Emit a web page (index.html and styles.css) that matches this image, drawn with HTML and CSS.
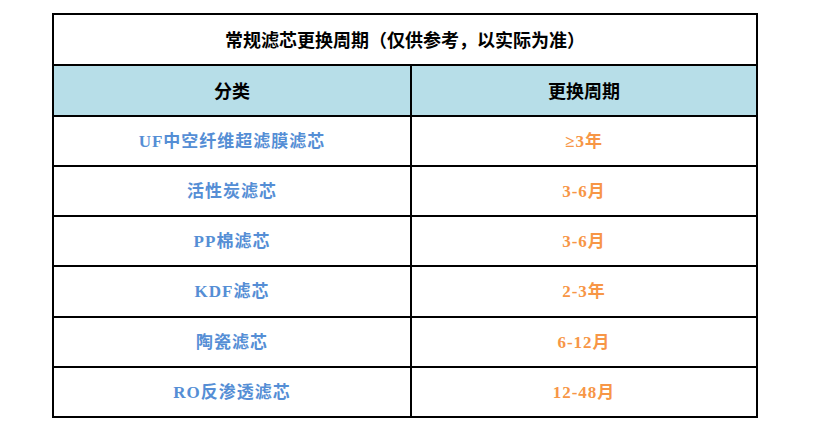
FILE: index.html
```html
<!DOCTYPE html>
<html lang="zh-CN">
<head>
<meta charset="utf-8">
<title>常规滤芯更换周期</title>
<link rel="stylesheet" href="styles.css">
</head>
<body>
<div class="page">
  <div class="sheet">
    <div class="cell title span">常规滤芯更换周期（仅供参考，以实际为准）</div>
    <div class="cell head">分类</div>
    <div class="cell head">更换周期</div>
    <div class="cell name">UF中空纤维超滤膜滤芯</div>
    <div class="cell period">≥3年</div>
    <div class="cell name">活性炭滤芯</div>
    <div class="cell period">3-6月</div>
    <div class="cell name">PP棉滤芯</div>
    <div class="cell period">3-6月</div>
    <div class="cell name tall">KDF滤芯</div>
    <div class="cell period tall">2-3年</div>
    <div class="cell name">陶瓷滤芯</div>
    <div class="cell period">6-12月</div>
    <div class="cell name">RO反渗透滤芯</div>
    <div class="cell period">12-48月</div>
  </div>
</div>
</body>
</html>
```

FILE: styles.css
```css
html, body {
  margin: 0;
  padding: 0;
  background: #ffffff;
}

.page {
  padding: 13px 0 0 52px;
}

.sheet {
  display: grid;
  grid-template-columns: 358px 346px;
  width: 704px;
  border-top: 2px solid #000;
  border-left: 2px solid #000;
}

.cell {
  box-sizing: border-box;
  height: 50px;
  display: flex;
  align-items: center;
  justify-content: center;
  border-right: 2px solid #000;
  border-bottom: 2px solid #000;
  font-weight: 700;
  font-size: 17px;
  letter-spacing: 1px;
  padding-bottom: 4px;
  font-family: "Liberation Serif", "Noto Sans CJK SC", serif;
}

.span {
  grid-column: 1 / span 2;
}

.title {
  height: 51px;
  font-family: "Noto Sans CJK SC", sans-serif;
  font-size: 18px;
  letter-spacing: 0;
  padding-bottom: 2px;
  color: #000;
}

.head {
  height: 51px;
  background: #b7dee8;
  font-family: "Noto Sans CJK SC", sans-serif;
  font-size: 18px;
  letter-spacing: 0;
  padding-bottom: 1px;
  color: #000;
}

.tall {
  height: 51px;
}

.name {
  color: #558ed5;
}

.period {
  color: #f79646;
}
```
